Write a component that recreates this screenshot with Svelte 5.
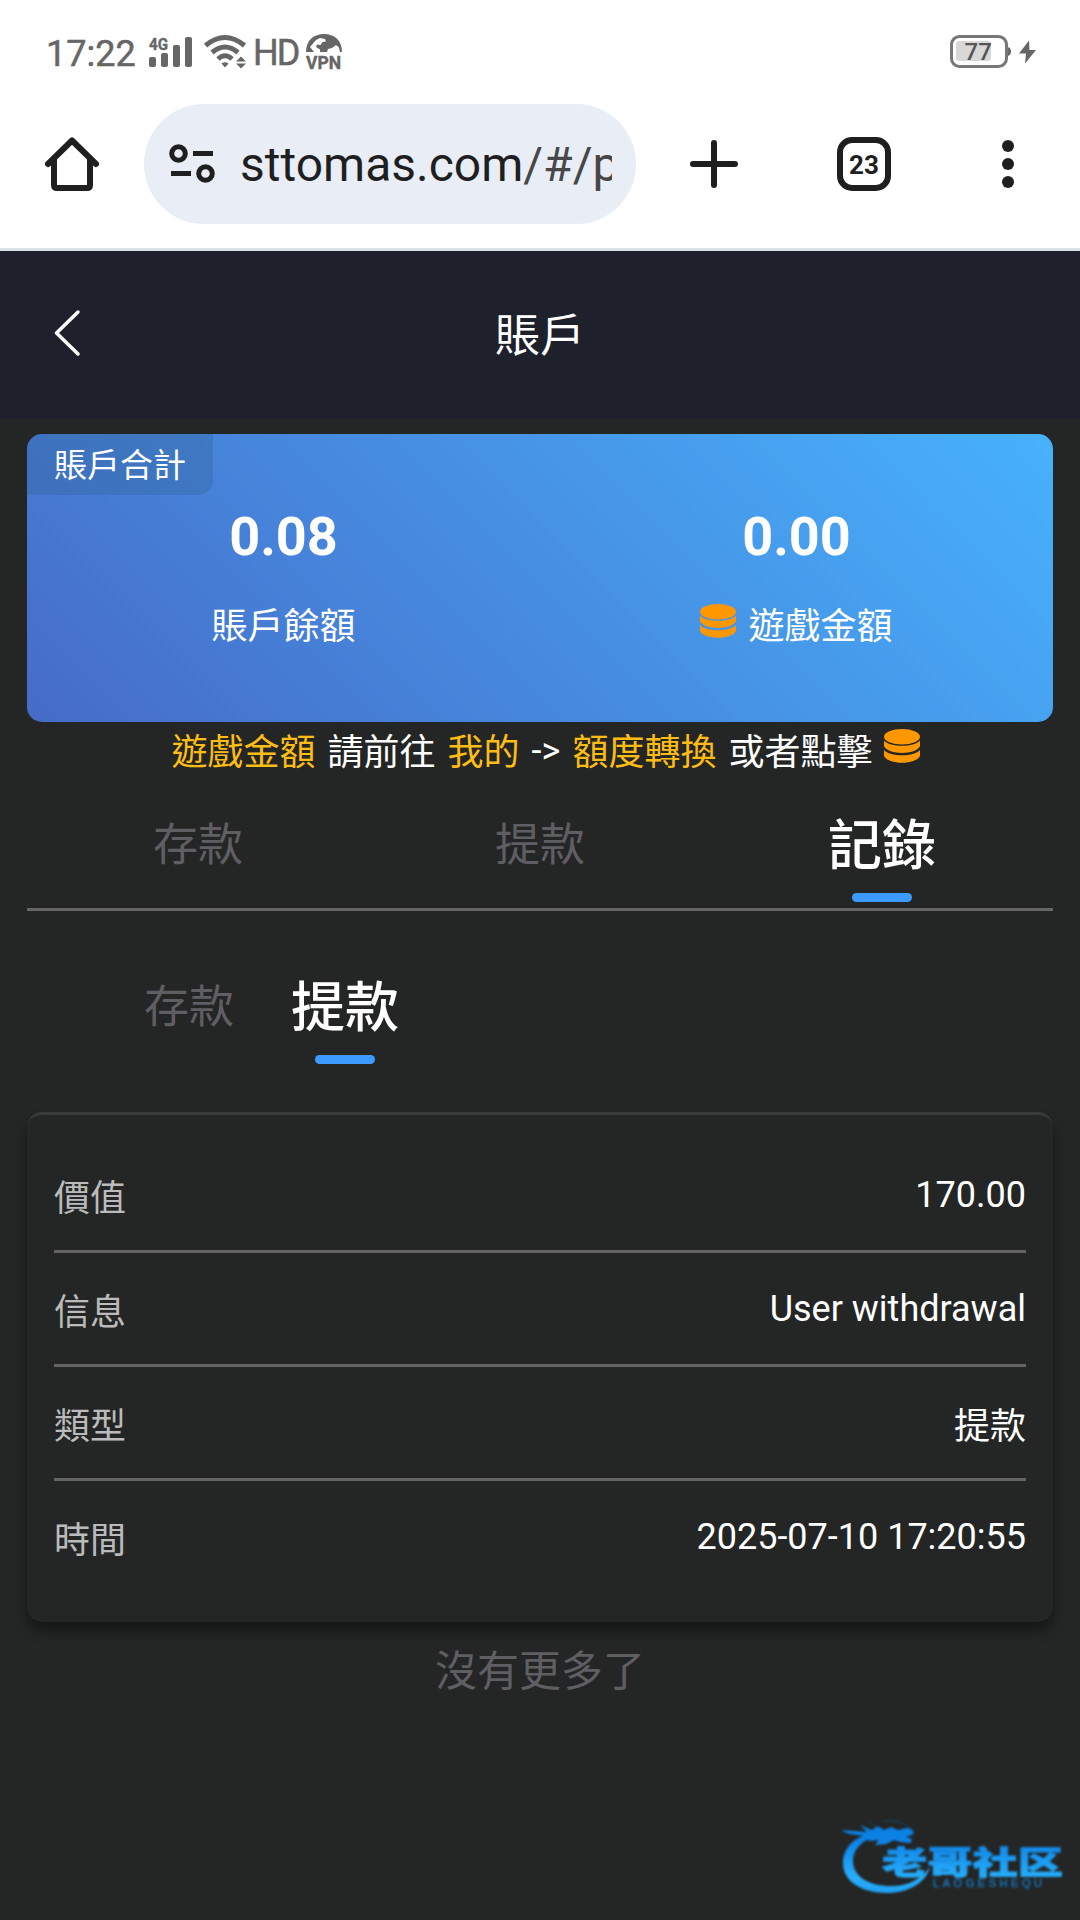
<script>
  const tabs = ['存款', '提款', '記錄'];
  const recordTabs = ['存款', '提款'];
  const details = [
    { label: '價值', value: '170.00' },
    { label: '信息', value: 'User withdrawal' },
    { label: '類型', value: '提款' },
    { label: '時間', value: '2025-07-10 17:20:55' }
  ];

  let activeTab = 2;
  let activeRecord = 1;
</script>

{#snippet coins()}
  <svg class="coins" viewBox="0 0 36 34">
    <ellipse cx="18" cy="7.8" rx="18" ry="7.7" />
    <path d="M0 11.5C6 18.5 30 18.5 36 11.5V17C32 26.3 4 26.3 0 17Z" />
    <path d="M0 21C6 28 30 28 36 21V27C32 36 4 36 0 27Z" />
  </svg>
{/snippet}

<div class="screen">
  <div class="status">
    <span class="clock">17:22</span>
    <svg class="signal" width="44" height="32" viewBox="0 0 44 32">
      <text x="0" y="13.5" textLength="19" lengthAdjust="spacingAndGlyphs">4G</text>
      <rect x="0" y="21" width="7" height="10" rx="2" />
      <rect x="12" y="17" width="7" height="14" rx="2" />
      <rect x="24" y="9" width="7" height="22" rx="2" />
      <rect x="36" y="1" width="7" height="30" rx="2" />
    </svg>
    <svg class="wifi" width="44" height="34" viewBox="0 0 44 34">
      <g fill="none" stroke="#666" stroke-width="5">
        <path d="M1.5 10.5Q21 -5.5 40.5 10.5" />
        <path d="M8 17.5Q21 6.5 34 17.5" />
        <path d="M14 24Q21 17.5 28 24" />
      </g>
      <path d="M17.5 28.5Q21 26 24.5 28.5L21 32.5Z" />
      <path d="M32 26.5L37 21.5L42 26.5ZM32 28.5H42L37 33.5Z" />
    </svg>
    <span class="hd">HD</span>
    <svg class="vpn" width="38" height="38" viewBox="0 0 38 38">
      <path d="M1 19C1 7 9 1 19 1S37 7 37 19Z" />
      <path fill="#fff" d="M11 7L15 5L20 6L21 8.5L17.500 9L15.500 12L12 11.500L11 14L15 16.500V19H9L5 14ZM22 19L23 16L27 15L31 12L34 14.500L35 19Z" />
      <text x="1" y="36" textLength="35" lengthAdjust="spacingAndGlyphs">VPN</text>
    </svg>
    <svg class="battery" width="88" height="34" viewBox="0 0 88 34">
      <rect x="1.5" y="1.5" width="55" height="30" rx="8" fill="#fff" stroke="#777" stroke-width="3" />
      <rect x="6" y="6" width="35" height="20" rx="3" fill="#d8d8d8" />
      <path d="M58 12Q61 13 61 16.500Q61 20 58 21Z" />
      <text x="14.500" y="24.500">77</text>
      <path d="M79 5.500L69 18.500H76L75 28.500L86 15H79.500Z" />
    </svg>
  </div>

  <div class="browser">
    <svg class="home" width="54" height="54" viewBox="0 0 54 54">
      <path d="M3 27L27 3.500L51 27M9 21V48Q9 51 12 51H42Q45 51 45 48V21" />
    </svg>
    <div class="address">
      <svg class="tune" width="46" height="40" viewBox="0 0 46 40">
        <circle cx="9.500" cy="9.500" r="6.800" />
        <path d="M24 9.500H44M2 29.500H22" />
        <circle cx="36.500" cy="29.500" r="6.800" />
      </svg>
      <span class="url">sttomas.com<span class="path">/#/p</span></span>
    </div>
    <svg class="plus" width="48" height="48" viewBox="0 0 48 48">
      <path d="M3 24H45M24 3V45" />
    </svg>
    <div class="count">23</div>
    <svg class="dots" width="12" height="48" viewBox="0 0 12 48">
      <circle cx="6" cy="6" r="6" />
      <circle cx="6" cy="24" r="6" />
      <circle cx="6" cy="42" r="6" />
    </svg>
  </div>

  <header>
    <svg class="back" width="28" height="48" viewBox="0 0 28 48">
      <path d="M24 3L2.500 24L24 45" />
    </svg>
    <h1>賬戶</h1>
  </header>

  <main>
    <section class="balance">
      <div class="tag">賬戶合計</div>
      <div class="sum">
        <strong>0.08</strong>
        <span>賬戶餘額</span>
      </div>
      <div class="sum">
        <strong>0.00</strong>
        <span>{@render coins()}遊戲金額</span>
      </div>
    </section>

    <p class="notice">
      <em>遊戲金額</em><span>請前往</span><em>我的</em><span class="arrow">-&gt;</span><em>額度轉換</em><span>或者點擊</span>{@render coins()}
    </p>

    <nav class="tabs">
      {#each tabs as tab, i}
        <button class:active={i === activeTab} on:click={() => (activeTab = i)}>{tab}</button>
      {/each}
    </nav>

    <nav class="tabs records">
      {#each recordTabs as tab, i}
        <button class:active={i === activeRecord} on:click={() => (activeRecord = i)}>{tab}</button>
      {/each}
    </nav>

    <section class="details">
      {#each details as item}
        <div class="row">
          <span class="label">{item.label}</span>
          <span class="value">{item.value}</span>
        </div>
      {/each}
    </section>

    <p class="end">沒有更多了</p>
  </main>

  <svg class="watermark" width="226" height="82" viewBox="0 0 226 82">
    <defs>
      <linearGradient id="water" x1="0" y1="0" x2="0" y2="82" gradientUnits="userSpaceOnUse">
        <stop offset="0.1" stop-color="#087fe0" />
        <stop offset="0.3" stop-color="#0d83e8" />
        <stop offset="0.75" stop-color="#27aefb" />
        <stop offset="1" stop-color="#1d9df0" />
      </linearGradient>
    </defs>
    <g fill="url(#water)">
      <path d="M31 17C12 21 2 33 2 47C2 65 20 77 46 77C67 77 85 67 89 51C80 63 68 70 50 70C27 70 12 60 12 45C12 32 22 24 36 20Z" />
      <path d="M0 14L14 15L26 16L19 9L31 14L37 10L43 14L50 11L57 14L66 12L71 13L73 18L65 21L71 23L70 27L59 26L53 24L45 28L34 29L38 24L28 25L24 20L8 18Z" />
      <path d="M28 4Q31 11 39 11M42 5Q61 3 71 14" fill="none" stroke="#124c77" stroke-width="1" />
      <text class="name" x="41" y="57.5" textLength="181" lengthAdjust="spacingAndGlyphs">老哥社区</text>
      <text class="latin" x="92" y="71" textLength="109">LAOGESHEQU</text>
    </g>
  </svg>
</div>

<style>
  :global(body) {
    margin: 0;
    background: #242625;
  }

  .screen {
    position: relative;
    width: 1080px;
    height: 1920px;
    overflow: hidden;
    background: #242625;
    color: #fff;
    font-family: Roboto, "Noto Sans CJK TC", sans-serif;
  }

  svg {
    display: block;
    flex: none;
    overflow: visible;
  }

  .status {
    display: flex;
    height: 104px;
    box-sizing: border-box;
    padding: 32px 44px 0 46px;
    background: #fff;
    color: #666;
    fill: #666;
  }

  .clock,
  .hd {
    font-size: 36px;
    line-height: 43px;
    -webkit-text-stroke: 0.5px #666;
  }

  .clock {
    width: 103px;
    padding-top: 1px;
  }

  .signal {
    margin-top: 4px;
  }

  .signal text {
    font-size: 17px;
    font-weight: 700;
    stroke: #666;
    stroke-width: 0.4px;
  }

  .wifi {
    margin: 3px 8px 0 11px;
  }

  .hd {
    width: 43px;
    margin-left: -3px;
    letter-spacing: -2px;
  }

  .vpn {
    margin: 1px 0 0 9px;
  }

  .vpn text {
    font-size: 18px;
    font-weight: 700;
    stroke: #666;
    stroke-width: 0.4px;
  }

  .battery {
    margin: 3px 0 0 auto;
    transform: translateX(2px);
  }

  .battery text {
    font-size: 24px;
    font-weight: 500;
    fill: #555;
  }

  .browser {
    display: flex;
    align-items: center;
    height: 120px;
    padding: 0 66px 24px 45px;
    border-bottom: 3px solid #dae2e8;
    background: #fff;
    color: #1f1f1f;
  }

  .home path,
  .plus path {
    fill: none;
    stroke: #1f1f1f;
    stroke-width: 6;
    stroke-linecap: round;
    stroke-linejoin: round;
  }

  .address {
    display: flex;
    align-items: center;
    width: 492px;
    height: 120px;
    box-sizing: border-box;
    margin-left: 45px;
    padding: 0 24px 0 25px;
    border-radius: 60px;
    background: #e8edf6;
  }

  .tune {
    fill: none;
    stroke: #1f1f1f;
    stroke-width: 5;
  }

  .url {
    flex: 1;
    margin-left: 25px;
    padding-top: 2px;
    overflow: hidden;
    white-space: nowrap;
    font-size: 48px;
    line-height: 60px;
  }

  .path {
    color: #474747;
  }

  .plus {
    margin-left: 54px;
  }

  .count {
    display: flex;
    align-items: center;
    justify-content: center;
    width: 54px;
    height: 54px;
    box-sizing: border-box;
    margin-left: 99px;
    padding-top: 1px;
    border: 6px solid #1f1f1f;
    border-radius: 15px;
    font-size: 26px;
    font-weight: 700;
  }

  .dots {
    margin-left: 111px;
    fill: #1f1f1f;
  }

  header {
    display: grid;
    grid-template-columns: 1fr auto 1fr;
    align-items: center;
    height: 168px;
    padding: 0 54px;
    background: #1e202b;
  }

  .back path {
    fill: none;
    stroke: #fff;
    stroke-width: 3.5;
    stroke-linecap: round;
    stroke-linejoin: round;
  }

  .back {
    margin-top: -5px;
  }

  h1 {
    margin: 3px 0 0;
    font-size: 45px;
    font-weight: 400;
    line-height: 60px;
  }

  main {
    padding: 15px 27px 0;
  }

  .balance {
    position: relative;
    display: grid;
    grid-template-columns: 1fr 1fr;
    height: 288px;
    border-radius: 15px;
    overflow: hidden;
    background: linear-gradient(45deg, #466bc8, #47b2fc);
  }

  .tag {
    position: absolute;
    top: 0;
    left: 0;
    padding: 3px 27px 0;
    border-radius: 0 0 15px 0;
    background: rgba(48, 96, 144, 0.3);
    font-size: 33px;
    line-height: 58px;
  }

  .sum {
    display: flex;
    flex-direction: column;
    align-items: center;
    padding-top: 70px;
  }

  .sum strong {
    font-size: 54px;
    line-height: 66px;
  }

  .sum span {
    display: flex;
    align-items: center;
    gap: 12px;
    margin-top: 31px;
    font-size: 36px;
    line-height: 52px;
  }

  .coins {
    width: 36px;
    height: 34px;
    margin-top: -12px;
    fill: #ff9700;
  }

  .notice {
    display: flex;
    align-items: center;
    justify-content: center;
    gap: 12px;
    height: 53px;
    margin: 0 0 4px;
    padding-left: 12px;
    font-size: 36px;
    white-space: nowrap;
  }

  .notice em {
    color: #fdbd15;
    font-style: normal;
  }

  .notice .arrow {
    padding-top: 4px;
  }

  .notice .coins {
    margin-top: -5px;
  }

  .tabs {
    display: grid;
    grid-template-columns: repeat(3, 1fr);
    height: 129px;
    border-bottom: 3px solid #666;
  }

  .tabs button {
    position: relative;
    height: 123px;
    padding: 1px 0 0;
    border: 0;
    background: none;
    color: #5f5f63;
    font: inherit;
    font-size: 45px;
  }

  .tabs button.active {
    color: #fff;
    font-size: 54px;
    font-weight: 500;
  }

  .tabs button.active::after {
    content: "";
    position: absolute;
    bottom: 0;
    left: 50%;
    width: 60px;
    height: 9px;
    margin-left: -30px;
    border-radius: 5px;
    background: #3d9bff;
  }

  .tabs.records {
    grid-template-columns: 90px 108px;
    gap: 57px;
    height: 171px;
    padding: 30px 0 0 117px;
    border: 0;
  }

  .details {
    height: 510px;
    box-sizing: border-box;
    padding: 24px 27px 0;
    border-top: 3px solid #3a3c3b;
    border-radius: 15px;
    background: #242625;
    box-shadow: 0 9px 12px rgba(0, 0, 0, 0.4);
  }

  .row {
    display: flex;
    align-items: center;
    justify-content: space-between;
    height: 111px;
    border-bottom: 3px solid #666365;
    font-size: 36px;
  }

  .row:last-child {
    border: 0;
  }

  .label {
    color: #bbb;
  }

  .end {
    margin: 20px 0 0;
    color: #5f5f63;
    font-size: 42px;
    line-height: 60px;
    text-align: center;
  }

  .watermark {
    position: absolute;
    left: 841px;
    top: 1816px;
    filter: blur(0.8px);
  }

  .name {
    font-family: "Noto Sans CJK SC", sans-serif;
    font-size: 32px;
    font-weight: 900;
    stroke: url(#water);
    stroke-width: 0.8px;
  }

  .latin {
    font-family: "Liberation Sans", sans-serif;
    font-size: 11px;
    fill: #1672b4;
    stroke: #1672b4;
    stroke-width: 0.5px;
  }
</style>
